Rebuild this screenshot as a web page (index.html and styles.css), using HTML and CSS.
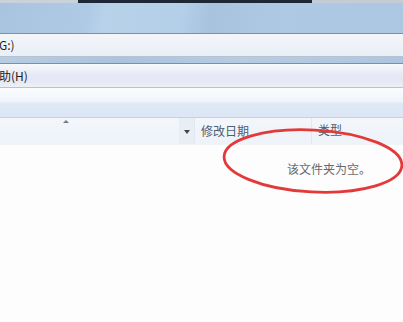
FILE: index.html
```html
<!DOCTYPE html>
<html>
<head>
<meta charset="utf-8">
<link rel="stylesheet" href="styles.css">
</head>
<body>
<div class="win">
  <div class="topstrip">
    <div class="ts-left"></div>
    <div class="ts-dark"></div>
    <div class="ts-right"></div>
  </div>
  <div class="title"></div>
  <div class="line dark"></div>
  <div class="address"><span class="addr-text">G:)</span></div>
  <div class="line mid"></div>
  <div class="bluestrip"></div>
  <div class="line dark"></div>
  <div class="menu"><span class="menu-text">助(H)</span></div>
  <div class="line mid"></div>
  <div class="toolbar"></div>
  <div class="line hdr"></div>
  <div class="header">
    <div class="col-name">
      <span class="sort-up"></span>
      <span class="dd"><span class="dd-arrow"></span></span>
    </div>
    <div class="col-date">修改日期</div>
    <div class="col-type">类型</div>
  </div>
  <div class="content">
    <div class="empty">该文件夹为空。</div>
  </div>
  <svg class="ring" width="403" height="322" viewBox="0 0 403 322">
    <ellipse cx="313" cy="161" rx="89" ry="31" transform="rotate(3 313 161)" fill="none" stroke="#e23a3a" stroke-width="2.8"/>
  </svg>
</div>
</body>
</html>
```

FILE: styles.css
```css
html, body {
  margin: 0;
  padding: 0;
  width: 403px;
  height: 322px;
  overflow: hidden;
  background: #fdfdfd;
  font-family: "Noto Sans CJK SC", "Liberation Sans", sans-serif;
}
.win {
  position: relative;
  width: 403px;
  height: 322px;
  display: flex;
  flex-direction: column;
}
.topstrip {
  height: 3px;
  display: flex;
}
.ts-left { width: 78px; background: #c9d1d9; }
.ts-dark { width: 234px; background: #1d2736; }
.ts-right { flex: 1; background: #c3ccd5; }
.title {
  height: 30px;
  background: linear-gradient(100deg, #a9c4df 0%, #afcae4 22%, #b8d2ea 26%, #b4cfe8 45%, #a8c3de 52%, #aec9e3 70%, #abc7e2 100%);
}
.line { height: 1px; }
.line.dark { background: #7f8fa0; }
.line.mid { background: #b6c3d2; }
.line.hdr { background: #c6d2df; }
.address {
  height: 22px;
  background: linear-gradient(#f3f6fa, #e9eff6);
  display: flex;
  align-items: center;
}
.addr-text {
  font-size: 12px;
  color: #1e1e1e;
  margin-left: -1px;
  line-height: 1;
}
.bluestrip {
  height: 6px;
  background: linear-gradient(90deg, #b8cde2, #aac4de 30%, #b6cce3 60%, #adc6df);
}
.menu {
  height: 23px;
  background: linear-gradient(#f8f9fd 0%, #e7e9f5 45%, #e4e7f4 70%, #eef0f8 100%);
  display: flex;
  align-items: center;
}
.menu-text {
  font-size: 12px;
  color: #1e1e1e;
  margin-left: -1px;
  line-height: 1;
}
.toolbar {
  height: 29px;
  background: linear-gradient(#fafcfe 0%, #f1f5fb 45%, #dfe8f5 55%, #dce6f4 100%);
}
.header {
  height: 26px;
  display: flex;
  background: linear-gradient(#f3f6fb, #eef3f9);
  border-bottom: 1px solid #f1f3f6;
}
.col-name {
  width: 194px;
  position: relative;
  border-right: 1px solid #e2e8f0;
  display: flex;
  justify-content: flex-end;
}
.sort-up {
  position: absolute;
  left: 63px;
  top: 2px;
  width: 0;
  height: 0;
  border-left: 3px solid transparent;
  border-right: 3px solid transparent;
  border-bottom: 3px solid #6d7d90;
}
.dd {
  width: 15px;
  height: 26px;
  background: #e9eef5;
  display: flex;
  align-items: center;
  justify-content: center;
}
.dd-arrow {
  width: 0;
  height: 0;
  border-left: 3.5px solid transparent;
  border-right: 3.5px solid transparent;
  border-top: 4px solid #3c4756;
  margin-top: 1px;
}
.col-date {
  width: 117px;
  padding-left: 6px;
  box-sizing: border-box;
  border-right: 1px solid #e2e8f0;
  font-size: 12px;
  color: #4e5d70;
  line-height: 26px;
}
.col-type {
  flex: 1;
  padding-left: 6px;
  font-size: 12px;
  color: #4e5d70;
  line-height: 24px;
}
.content {
  flex: 1;
  background: #fdfdfd;
}
.empty {
  margin: 16px 0 0 287px;
  font-size: 12px;
  color: #6a6a6a;
  line-height: 16px;
}
.ring {
  position: absolute;
  left: 0;
  top: 0;
  pointer-events: none;
}
```
